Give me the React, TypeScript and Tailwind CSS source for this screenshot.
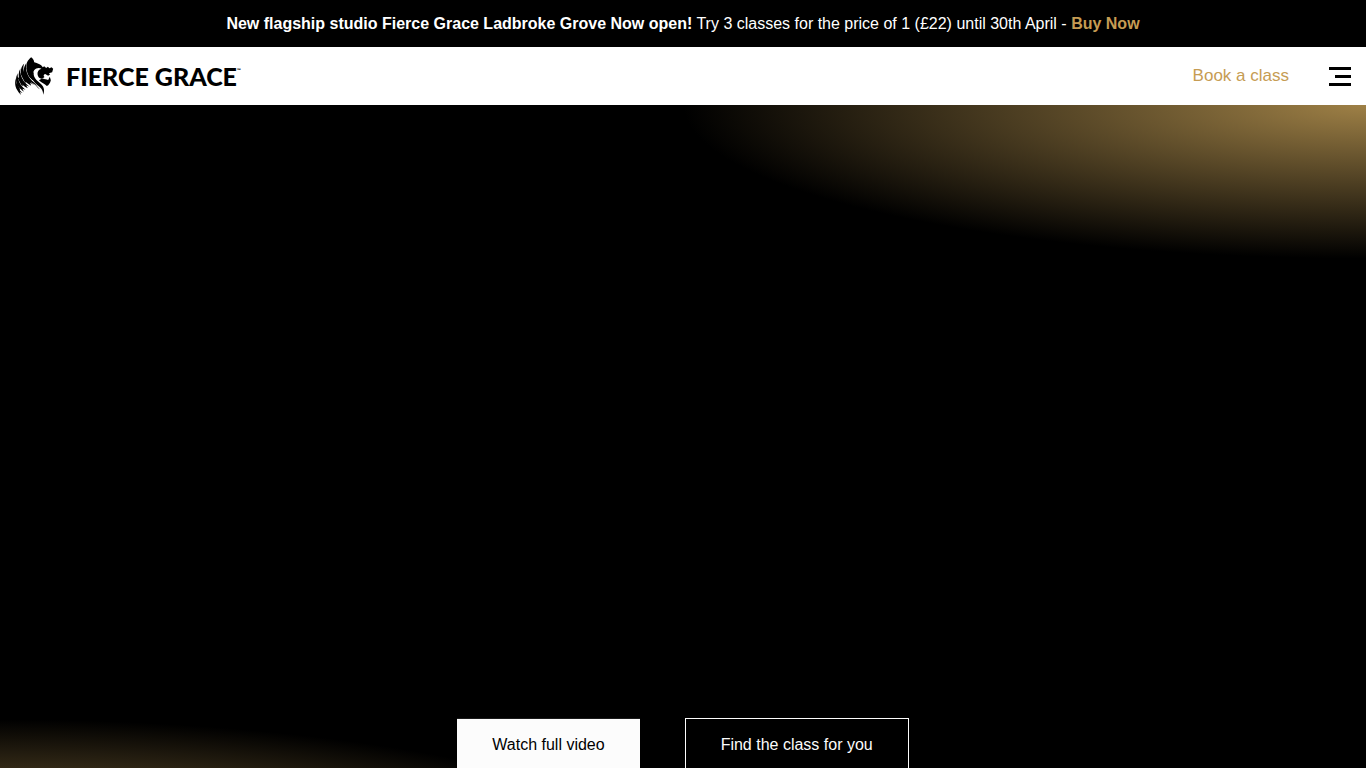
import { clsx } from "clsx";

function LionMark() {
  return (
    <svg
      viewBox="20 20 116 114"
      className="h-[38px] w-[39px] shrink-0"
      fill="currentColor"
      aria-hidden="true"
    >
      <path d="M68 21 C58 29 52 39 54 52 C55 67 61 79 71 87 L80 93 C73 83 71 69 77 60 C83 52 92 51 99 55 C91 57 86 64 87 72 C88 81 94 86 101 85 L108 80 C104 77 105 72 110 71 L119 76 L125 72 L121 69 L131 66 L134 55 L129 51 L123 54 L118 49 L113 53 L107 48 L103 51 L98 45 C92 40 84 38 77 36 C77 30 73 25 68 21 Z" />
      <path d="M98 86 C104 84 108 87 112 87 L119 89 L124 79 L127 90 C125 98 121 105 115 107 C108 100 100 98 91 90 Z" />
      <path d="M77 63 C71 79 84 90 94 98 C106 107 110 119 104 133 C104 119 97 112 86 104 C73 94 66 78 77 63 Z" />
      <path d="M53 39 C43 54 44 71 51 83 C60 95 76 97 84 108 C88 113 93 116 97 120 C87 111 83 102 75 95 C61 84 50 66 53 39 Z" />
      <path d="M47 40 C38 48 35 60 39 73 C43 88 53 98 68 106 L65 97 L78 105 C63 93 48 77 45 59 C44 52 45 46 47 40 Z" />
      <path d="M36 54 C29 65 29 79 34 91 C39 102 47 109 58 114 L53 105 L63 109 C50 98 40 87 37 73 C35 66 35 60 36 54 Z" />
      <path d="M28 69 C20 82 22 96 27 105 C32 113 38 119 46 124 L42 115 L51 118 C41 109 33 100 30 88 C28 81 27 75 28 69 Z" />
      <path d="M22 84 C18 98 20 110 26 119 C29 125 33 130 38 134 L34 125 L42 128 C34 120 28 113 25 103 C23 96 22 90 22 84 Z" />
      <path d="M58 54 C62 70 70 82 82 94 L71 88 C61 79 56 69 54 52 Z" />
      <path
        d="M39 70 L51 94 M31 84 L41 104 M48 66 L61 91 M25 102 L32 117"
        fill="none"
        stroke="currentColor"
        strokeWidth="5"
        strokeLinecap="round"
      />
    </svg>
  );
}

function Banner() {
  return (
    <div className="bg-black px-4 py-[11px] text-center text-base leading-[25px] text-white">
      <strong>New flagship studio Fierce Grace Ladbroke Grove Now open!</strong>{" "}
      Try 3 classes for the price of 1 (£22) until 30th April -{" "}
      <a href="#buy" className="font-bold text-[#c69c53]">
        Buy Now
      </a>
    </div>
  );
}

function Header() {
  return (
    <header className="flex h-[58px] items-center justify-between bg-white px-[15px]">
      <a href="#home" className="flex items-center gap-3 text-black">
        <LionMark />
        <span className="flex font-[Lato,sans-serif] text-[25px] leading-8 font-black">
          FIERCE GRACE
          <span className="text-[5px] leading-5">™</span>
        </span>
      </a>
      <div className="flex items-center gap-10">
        <a href="#book" className="text-[17px] text-[#c69c53]">
          Book a class
        </a>
        <button
          type="button"
          aria-label="Menu"
          className="flex w-[22px] flex-col items-end gap-[5px]"
        >
          <span className="h-[3px] w-full bg-black" />
          <span className="h-[3px] w-4 bg-black" />
          <span className="h-[3px] w-full bg-black" />
        </button>
      </div>
    </header>
  );
}

function HeroLink({
  href,
  label,
  filled,
}: {
  href: string;
  label: string;
  filled?: boolean;
}) {
  return (
    <a
      href={href}
      className={clsx(
        "px-[35px] py-[14px] text-base leading-6",
        filled
          ? "border-y border-b-[#fcfcfc] border-t-[#1a1a1a] bg-[#fcfcfc] text-black"
          : "border border-[#fcfcfc] text-[#fcfcfc]"
      )}
    >
      {label}
    </a>
  );
}

function Hero() {
  return (
    <main className="flex min-h-screen flex-col justify-end bg-black bg-[radial-gradient(50%_20%_at_100%_0%,#9e8046,transparent),radial-gradient(50%_20%_at_0%_100%,#9e8046,transparent)] pb-[101px]">
      <div className="flex justify-center gap-[45px]">
        <HeroLink href="#video" label="Watch full video" filled />
        <HeroLink href="#classes" label="Find the class for you" />
      </div>
    </main>
  );
}

export default function App() {
  return (
    <div className="font-['Liberation_Sans',Arial,sans-serif]">
      <Banner />
      <Header />
      <Hero />
    </div>
  );
}
